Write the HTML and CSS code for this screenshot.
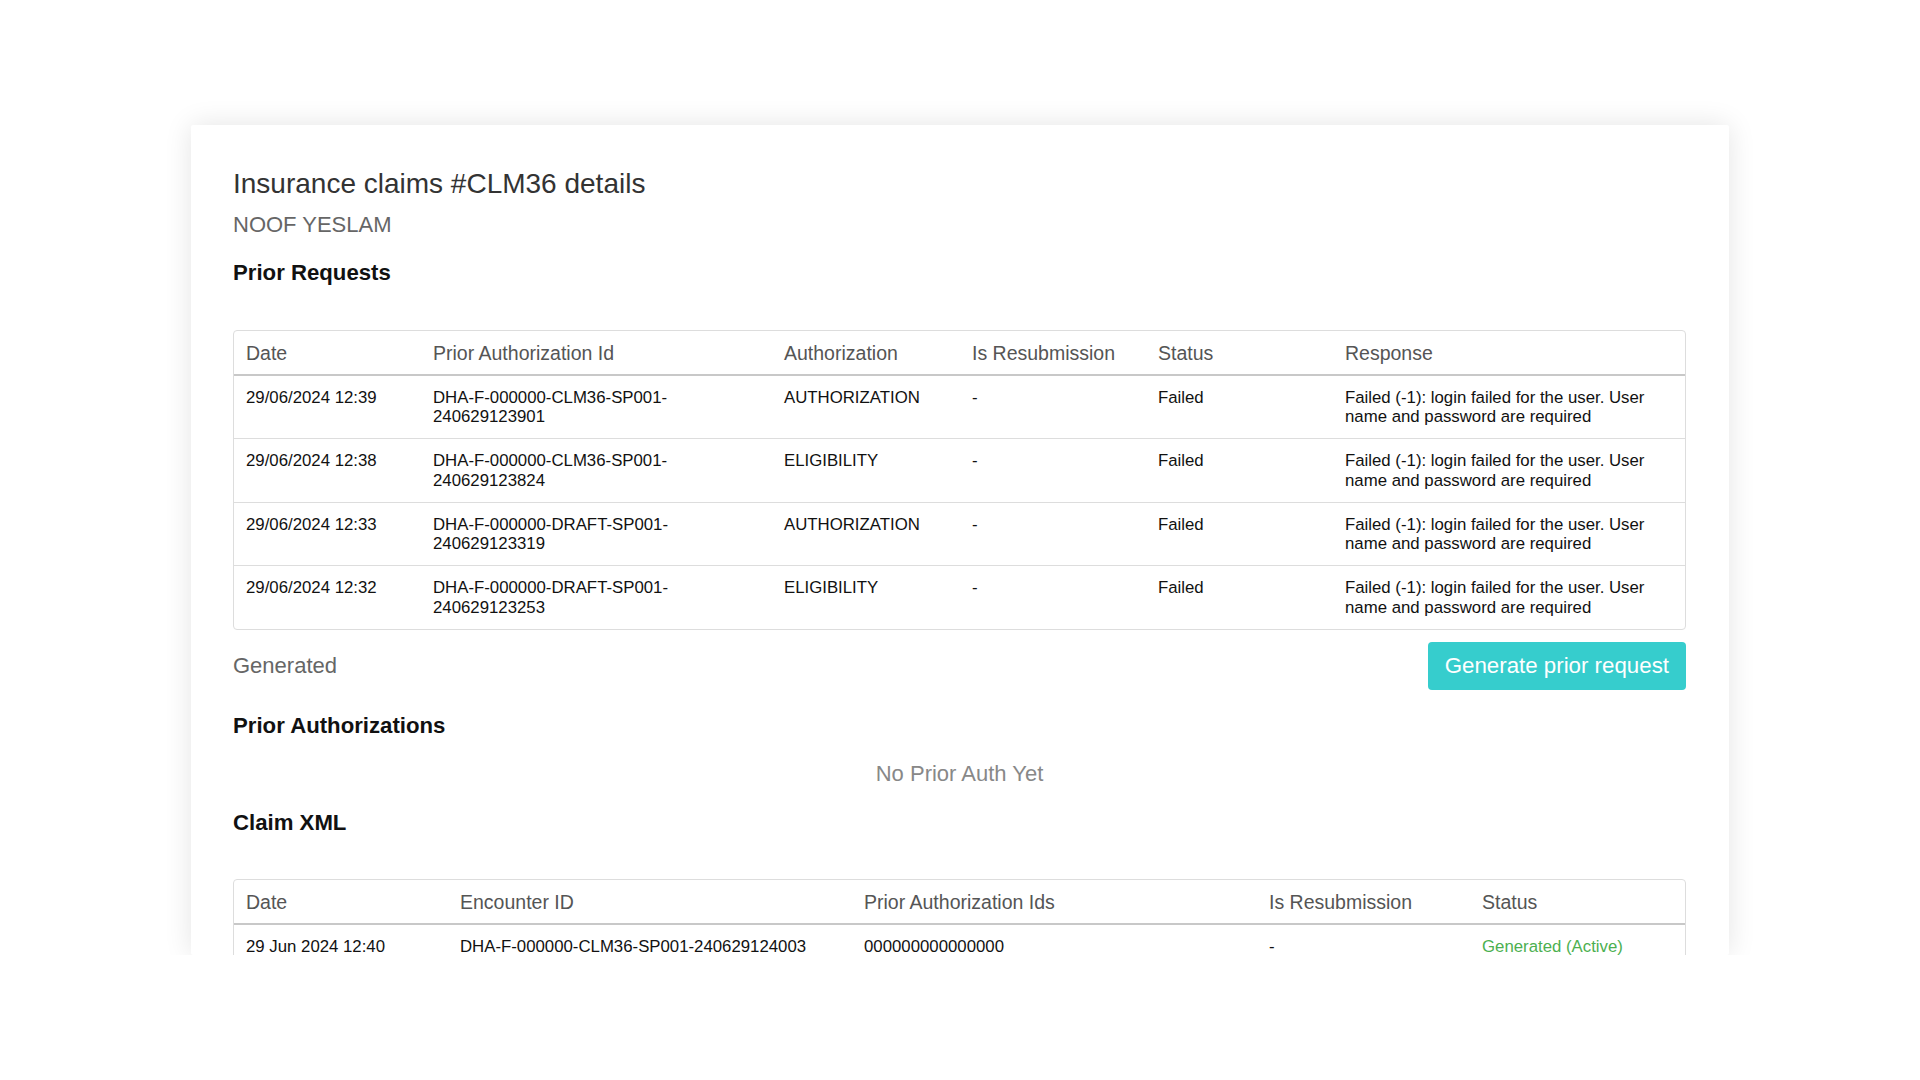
FILE: index.html
```html
<!DOCTYPE html>
<html lang="en">
<head>
  <meta charset="UTF-8">
  <title>Insurance claims #CLM36 details</title>
  <link rel="stylesheet" href="styles.css">
</head>
<body>
  <div class="card">
    <h1 class="title">Insurance claims #CLM36 details</h1>
    <div class="patient">NOOF YESLAM</div>

    <h2 class="section">Prior Requests</h2>
    <div class="table-wrap">
      <table>
        <colgroup>
          <col class="w-187">
          <col class="w-351">
          <col class="w-188">
          <col class="w-186">
          <col class="w-187">
          <col>
        </colgroup>
        <thead>
          <tr>
            <th>Date</th>
            <th>Prior Authorization Id</th>
            <th>Authorization</th>
            <th>Is Resubmission</th>
            <th>Status</th>
            <th>Response</th>
          </tr>
        </thead>
        <tbody>
          <tr>
            <td>29/06/2024 12:39</td>
            <td>DHA-F-000000-CLM36-SP001-<wbr>240629123901</td>
            <td>AUTHORIZATION</td>
            <td>-</td>
            <td>Failed</td>
            <td>Failed (-1): login failed for the user. User name and password are required</td>
          </tr>
          <tr>
            <td>29/06/2024 12:38</td>
            <td>DHA-F-000000-CLM36-SP001-<wbr>240629123824</td>
            <td>ELIGIBILITY</td>
            <td>-</td>
            <td>Failed</td>
            <td>Failed (-1): login failed for the user. User name and password are required</td>
          </tr>
          <tr>
            <td>29/06/2024 12:33</td>
            <td>DHA-F-000000-DRAFT-SP001-<wbr>240629123319</td>
            <td>AUTHORIZATION</td>
            <td>-</td>
            <td>Failed</td>
            <td>Failed (-1): login failed for the user. User name and password are required</td>
          </tr>
          <tr>
            <td>29/06/2024 12:32</td>
            <td>DHA-F-000000-DRAFT-SP001-<wbr>240629123253</td>
            <td>ELIGIBILITY</td>
            <td>-</td>
            <td>Failed</td>
            <td>Failed (-1): login failed for the user. User name and password are required</td>
          </tr>
        </tbody>
      </table>
    </div>

    <div class="generated-row">
      <span class="generated">Generated</span>
      <button class="btn-generate" type="button">Generate prior request</button>
    </div>

    <h2 class="section section-auth">Prior Authorizations</h2>
    <div class="empty">No Prior Auth Yet</div>

    <h2 class="section">Claim XML</h2>
    <div class="table-wrap table-wrap-claims">
      <table>
        <colgroup>
          <col class="w-214">
          <col class="w-404">
          <col class="w-405">
          <col class="w-213">
          <col>
        </colgroup>
        <thead>
          <tr>
            <th>Date</th>
            <th>Encounter ID</th>
            <th>Prior Authorization Ids</th>
            <th>Is Resubmission</th>
            <th>Status</th>
          </tr>
        </thead>
        <tbody>
          <tr>
            <td>29 Jun 2024 12:40</td>
            <td>DHA-F-000000-CLM36-SP001-240629124003</td>
            <td>000000000000000</td>
            <td>-</td>
            <td class="status-active">Generated (Active)</td>
          </tr>
        </tbody>
      </table>
    </div>
  </div>
</body>
</html>
```

FILE: styles.css
```css
body {
  margin: 0;
  background: #fff;
  font-family: "Liberation Sans", Arial, sans-serif;
  color: #111;
}
.card {
  box-sizing: border-box;
  width: 1538px;
  height: 830px;
  margin: 125px 0 0 191px;
  padding: 42px 43px 0 42px;
  background: #fff;
  border-radius: 2px;
  box-shadow: 0 0 28px rgba(0, 0, 0, 0.11);
  overflow: hidden;
}
.title {
  margin: 0;
  font-size: 28px;
  font-weight: normal;
  line-height: 1.2;
  color: #333;
}
.patient {
  margin-top: 11px;
  font-size: 22px;
  line-height: 1.2;
  color: #666;
}
.section {
  margin: 22px 0 0;
  font-size: 22.2px;
  font-weight: bold;
  line-height: 1.2;
  color: #111;
}
.section-auth {
  margin-top: 23px;
}
.table-wrap {
  margin-top: 43px;
  border: 1px solid #ddd;
  border-radius: 4px;
  overflow: hidden;
}
.table-wrap-claims {
  margin-top: 43px;
}
table {
  width: 100%;
  border-collapse: collapse;
  table-layout: fixed;
}
.w-186 { width: 186px; }
.w-187 { width: 187px; }
.w-188 { width: 188px; }
.w-351 { width: 351px; }
.w-213 { width: 213px; }
.w-214 { width: 214px; }
.w-404 { width: 404px; }
.w-405 { width: 405px; }
th {
  padding: 11px 12px 9px;
  text-align: left;
  font-size: 19.5px;
  font-weight: normal;
  line-height: 23px;
  color: #555;
  border-bottom: 2px solid #c8c8c8;
}
td {
  padding: 12px 12px 11.5px;
  vertical-align: top;
  font-size: 16.8px;
  line-height: 19.5px;
  color: #111;
}
tbody tr + tr td {
  border-top: 1px solid #ddd;
}
.generated-row {
  display: flex;
  justify-content: space-between;
  align-items: center;
  margin-top: 12px;
}
.generated {
  font-size: 22px;
  color: #666;
}
.btn-generate {
  height: 48px;
  padding: 0 17px;
  border: none;
  border-radius: 4px;
  background: #36cdcd;
  color: #fff;
  font-family: "Liberation Sans", Arial, sans-serif;
  font-size: 22.3px;
  line-height: 26px;
  cursor: pointer;
}
.empty {
  margin-top: 22px;
  text-align: center;
  font-size: 22px;
  line-height: 1.2;
  color: #888;
}
.status-active {
  color: #4cb050;
}
```
